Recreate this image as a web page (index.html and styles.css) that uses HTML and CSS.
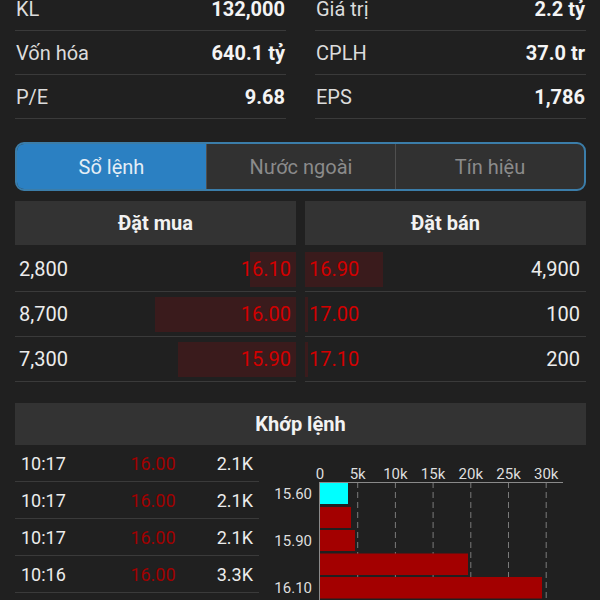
FILE: index.html
```html
<!DOCTYPE html>
<html lang="vi">
<head>
<meta charset="utf-8">
<link rel="stylesheet" href="styles.css">
</head>
<body>
<div class="stats">
  <div class="stat"><span class="lbl">KL</span><span class="val">132,000</span></div>
  <div class="stat"><span class="lbl">Giá trị</span><span class="val">2.2 tỷ</span></div>
  <div class="stat"><span class="lbl">Vốn hóa</span><span class="val">640.1 tỷ</span></div>
  <div class="stat"><span class="lbl">CPLH</span><span class="val">37.0 tr</span></div>
  <div class="stat"><span class="lbl">P/E</span><span class="val">9.68</span></div>
  <div class="stat"><span class="lbl">EPS</span><span class="val">1,786</span></div>
</div>

<div class="tabs">
  <div class="tab active">Sổ lệnh</div>
  <div class="tab">Nước ngoài</div>
  <div class="tab">Tín hiệu</div>
</div>

<div class="book">
  <div class="side bid">
    <div class="head">Đặt mua</div>
    <div class="row"><span class="depth" style="width:46px"></span><span class="qty">2,800</span><span class="px">16.10</span></div>
    <div class="row"><span class="depth" style="width:141px"></span><span class="qty">8,700</span><span class="px">16.00</span></div>
    <div class="row"><span class="depth" style="width:118px"></span><span class="qty">7,300</span><span class="px">15.90</span></div>
  </div>
  <div class="side ask">
    <div class="head">Đặt bán</div>
    <div class="row"><span class="depth" style="width:78px"></span><span class="px">16.90</span><span class="qty">4,900</span></div>
    <div class="row"><span class="depth" style="width:3px"></span><span class="px">17.00</span><span class="qty">100</span></div>
    <div class="row"><span class="depth" style="width:3px"></span><span class="px">17.10</span><span class="qty">200</span></div>
  </div>
</div>

<div class="match">
  <div class="match-head">Khớp lệnh</div>
  <div class="match-body">
    <div class="trades">
      <div class="trade"><span class="t">10:17</span><span class="p">16.00</span><span class="v">2.1K</span></div>
      <div class="trade"><span class="t">10:17</span><span class="p">16.00</span><span class="v">2.1K</span></div>
      <div class="trade"><span class="t">10:17</span><span class="p">16.00</span><span class="v">2.1K</span></div>
      <div class="trade"><span class="t">10:16</span><span class="p">16.00</span><span class="v">3.3K</span></div>
    </div>
    <svg class="chart" width="341" height="156" viewBox="0 0 341 156">
      <g class="xlab" text-anchor="middle">
        <text x="61" y="34">0</text>
        <text x="98.7" y="34">5k</text>
        <text x="136.4" y="34">10k</text>
        <text x="174.1" y="34">15k</text>
        <text x="211.8" y="34">20k</text>
        <text x="249.5" y="34">25k</text>
        <text x="287.2" y="34">30k</text>
      </g>
      <g class="grid">
        <line x1="98.7" y1="37" x2="98.7" y2="156"/>
        <line x1="136.4" y1="37" x2="136.4" y2="156"/>
        <line x1="174.1" y1="37" x2="174.1" y2="156"/>
        <line x1="211.8" y1="37" x2="211.8" y2="156"/>
        <line x1="249.5" y1="37" x2="249.5" y2="156"/>
        <line x1="287.2" y1="37" x2="287.2" y2="156"/>
      </g>
      <line class="axis" x1="61" y1="37.5" x2="304" y2="37.5"/>
      <line class="axis" x1="60.5" y1="37" x2="60.5" y2="156"/>
      <rect class="b-cyan" x="61" y="38" width="28" height="21"/>
      <rect class="b-red" x="61" y="62" width="31" height="21"/>
      <rect class="b-red" x="61" y="85" width="35" height="21"/>
      <rect class="b-red" x="61" y="108.5" width="148" height="21.5"/>
      <rect class="b-red" x="61" y="132" width="222" height="21.5"/>
      <g class="ylab" text-anchor="end">
        <text x="53" y="54">15.60</text>
        <text x="53" y="101">15.90</text>
        <text x="53" y="148">16.10</text>
      </g>
    </svg>
  </div>
</div>
</body>
</html>
```

FILE: styles.css
```css
html, body {
  margin: 0;
  padding: 0;
  height: 600px;
  overflow: hidden;
}
body {
  background: #202020;
  color: #e6e6e6;
  font-family: Roboto, "Noto Sans", "Liberation Sans", sans-serif;
}

/* stats */
.stats {
  display: grid;
  grid-template-columns: 271px 271px;
  column-gap: 29px;
  padding: 0 14px 0 15px;
  margin-top: -13px;
}
.stat {
  box-sizing: border-box;
  height: 44px;
  border-bottom: 1px solid #3a3a3a;
  display: flex;
  justify-content: space-between;
  align-items: center;
  font-size: 20px;
}
.stat .lbl {
  color: #dcdcdc;
  padding-left: 1px;
}
.stat .val {
  color: #f4f4f4;
  font-weight: 700;
  padding-right: 1px;
}

/* tabs */
.tabs {
  box-sizing: border-box;
  margin: 23px 14px 0 15px;
  height: 49px;
  border: 2px solid #3b7da9;
  border-radius: 9px;
  overflow: hidden;
  display: grid;
  grid-template-columns: 1fr 1fr 1fr;
  background: #313131;
}
.tab {
  display: flex;
  align-items: center;
  justify-content: center;
  font-size: 20px;
  color: #8b8b8b;
}
.tab + .tab {
  border-left: 1px solid #4f4f4f;
}
.tab.active {
  background: #2b80c2;
  color: #e4eef6;
}

/* order book */
.book {
  display: grid;
  grid-template-columns: 1fr 1fr;
  column-gap: 9px;
  margin: 10px 14px 0 15px;
}
.head {
  height: 44px;
  background: #333333;
  display: flex;
  align-items: center;
  justify-content: center;
  font-size: 20px;
  font-weight: 700;
  color: #f2f2f2;
  margin-bottom: 2px;
}
.row {
  position: relative;
  box-sizing: border-box;
  height: 45px;
  border-bottom: 1px solid #3a3a3a;
  display: flex;
  align-items: center;
  justify-content: space-between;
  font-size: 20px;
}
.depth {
  position: absolute;
  top: 5px;
  bottom: 4px;
  background: #3a1b1c;
}
.bid .depth { right: 0; }
.ask .depth { left: 0; }
.row .qty, .row .px {
  position: relative;
}
.row .qty { color: #ececec; }
.row .px { color: #d20000; }
.bid .qty { padding-left: 4px; }
.bid .px { padding-right: 5px; }
.ask .px { padding-left: 4px; }
.ask .qty { padding-right: 6px; }

/* match */
.match {
  margin: 21px 14px 0 15px;
}
.match-head {
  height: 42px;
  background: #333333;
  display: flex;
  align-items: center;
  justify-content: center;
  font-size: 20px;
  font-weight: 700;
  color: #f2f2f2;
}
.match-body {
  display: grid;
  grid-template-columns: 244px 341px;
}
.trades {
  display: flex;
  flex-direction: column;
}
.trade {
  box-sizing: border-box;
  height: 37px;
  border-bottom: 1px solid #3a3a3a;
  display: grid;
  grid-template-columns: 100px 76px 1fr;
  align-items: center;
  font-size: 18px;
}
.trade .t { padding-left: 6px; color: #ececec; }
.trade .p { text-align: center; color: #a00000; }
.trade .v { text-align: right; padding-right: 6px; color: #ececec; }

.chart {
  display: block;
  font-family: Roboto, "Noto Sans", "Liberation Sans", sans-serif;
  font-size: 15px;
}
.chart text { fill: #dedede; }
.grid line {
  stroke: #7a7a7a;
  stroke-width: 1;
  stroke-dasharray: 6 4;
}
.axis {
  stroke: #8a8a8a;
  stroke-width: 1;
}
.b-cyan { fill: #00ffff; }
.b-red { fill: #a30000; }
```
